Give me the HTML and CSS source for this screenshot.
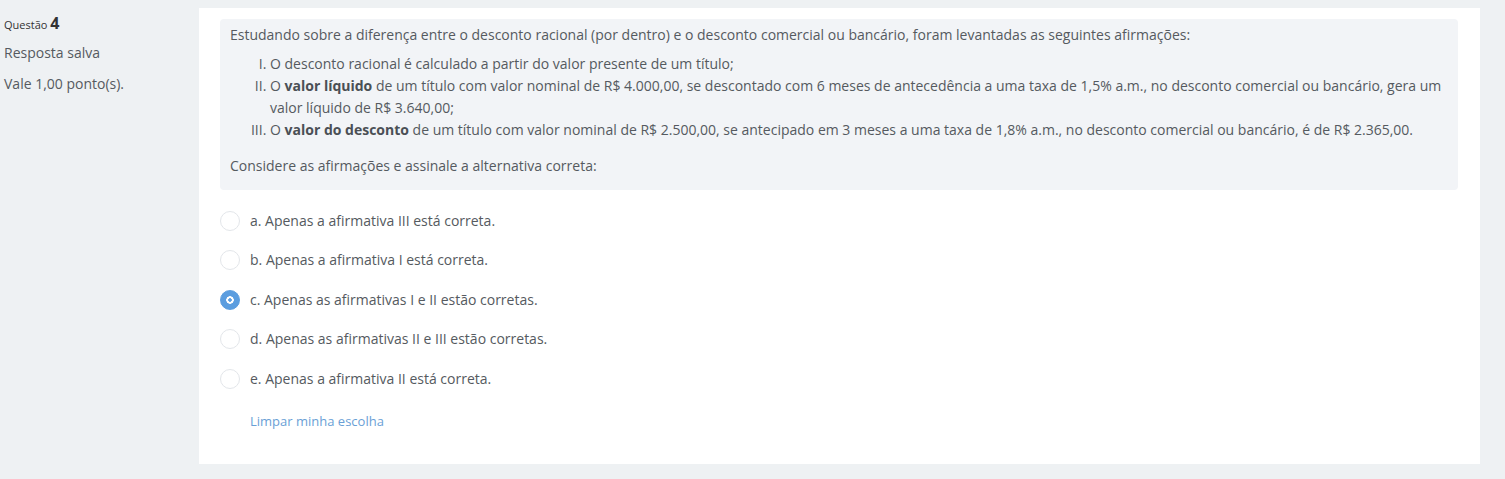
FILE: index.html
```html
<!DOCTYPE html>
<html lang="pt">
<head>
<meta charset="utf-8">
<title>Questão 4</title>
<link rel="stylesheet" href="styles.css">
</head>
<body>
<div class="page">
  <aside class="info">
    <div class="qno">Questão <span class="num">4</span></div>
    <div class="state">Resposta salva</div>
    <div class="grade">Vale 1,00 ponto(s).</div>
  </aside>
  <main class="card">
    <div class="formulation">
      <p class="intro">Estudando sobre a diferença entre o desconto racional (por dentro) e o desconto comercial ou bancário, foram levantadas as seguintes afirmações:</p>
      <ol class="items">
        <li>O desconto racional é calculado a partir do valor presente de um título;</li>
        <li>O <strong>valor líquido</strong> de um título com valor nominal de R$ 4.000,00, se descontado com 6 meses de antecedência a uma taxa de 1,5% a.m., no desconto comercial ou bancário, gera um valor líquido de R$ 3.640,00;</li>
        <li>O <strong>valor do desconto</strong> de um título com valor nominal de R$ 2.500,00, se antecipado em 3 meses a uma taxa de 1,8% a.m., no desconto comercial ou bancário, é de R$ 2.365,00.</li>
      </ol>
      <p class="prompt">Considere as afirmações e assinale a alternativa correta:</p>
    </div>
    <div class="answers">
      <div class="option"><span class="radio"></span><span class="label">a. Apenas a afirmativa III está correta.</span></div>
      <div class="option"><span class="radio"></span><span class="label">b. Apenas a afirmativa I está correta.</span></div>
      <div class="option"><span class="radio checked"></span><span class="label">c. Apenas as afirmativas I e II estão corretas.</span></div>
      <div class="option"><span class="radio"></span><span class="label">d. Apenas as afirmativas II e III estão corretas.</span></div>
      <div class="option"><span class="radio"></span><span class="label">e. Apenas a afirmativa II está correta.</span></div>
    </div>
    <a class="clear" href="#">Limpar minha escolha</a>
  </main>
</div>
</body>
</html>
```
FILE: styles.css
```css
* { box-sizing: border-box; }
html, body { margin: 0; padding: 0; }
body {
  background: #eef1f3;
  font-family: "Open Sans", "Liberation Sans", sans-serif;
  font-size: 14px;
  color: #555a60;
  width: 1505px;
  height: 479px;
  overflow: hidden;
}
.page {
  display: flex;
  align-items: flex-start;
  padding-top: 8px;
}
.info {
  width: 199px;
  flex: none;
  padding-left: 4px;
}
.qno {
  font-size: 11px;
  line-height: 18px;
  color: #333;
  margin-top: 6px;
}
.qno .num {
  font-size: 16px;
  font-weight: 700;
  color: #333;
}
.state {
  margin-top: 9px;
  line-height: 20px;
}
.grade {
  margin-top: 11px;
  line-height: 20px;
}
.card {
  width: 1281px;
  height: 456px;
  background: #fff;
  padding: 11px 22px 0 21px;
}
.formulation {
  background: #f2f4f7;
  border-radius: 4px;
  padding: 5px 10px 13px 10px;
  line-height: 22px;
}
.formulation p { margin: 0; }
.intro { margin-bottom: 7px !important; }
.items {
  margin: 0 0 14px 0;
  padding-left: 40px;
  list-style: upper-roman;
}
.items strong { font-weight: 700; color: #4a4f55; }
.answers {
  padding-top: 11px;
  display: flex;
  flex-direction: column;
}
.option {
  display: flex;
  align-items: center;
  height: 39.5px;
}
.radio {
  width: 20px;
  height: 20px;
  border-radius: 50%;
  border: 1px solid #e3e6ea;
  background: #fff;
  flex: none;
  margin-right: 10px;
}
.radio.checked {
  border-color: #5b9ddf;
  background: radial-gradient(circle, #5b9ddf 0 1.5px, #fff 2px 3.5px, #5b9ddf 4px);
}
.label { line-height: 20px; }
.clear {
  display: inline-block;
  margin-top: 13px;
  margin-left: 30px;
  color: #6a9fd6;
  text-decoration: none;
  font-size: 13px;
}
```
